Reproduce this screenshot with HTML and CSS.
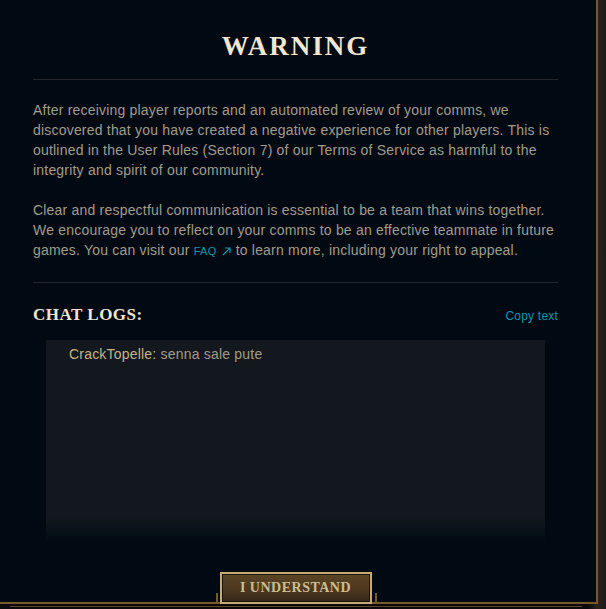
FILE: index.html
```html
<!DOCTYPE html>
<html>
<head>
<meta charset="utf-8">
<link rel="stylesheet" href="styles.css">
</head>
<body>
<div class="modal">
  <h1 class="title">WARNING</h1>
  <div class="divider"></div>
  <div class="body">
    <p>After receiving player reports and an automated review of your comms, we discovered that you have created a negative experience for other players. This is outlined in the User Rules (Section 7) of our Terms of Service as harmful to the integrity and spirit of our community.</p>
    <p>Clear and respectful communication is essential to be a team that wins together. We encourage you to reflect on your comms to be an effective teammate in future games. You can visit our <a class="faq">FAQ</a><svg class="arrow" width="9" height="9" viewBox="0 0 9 9"><path d="M1 8 L8 1 M3 1 H8 V6" fill="none" stroke="#0397ab" stroke-width="1.2"/></svg> to learn more, including your right to appeal.</p>
  </div>
  <div class="divider second"></div>
  <div class="chat-head">
    <h2 class="chat-title">CHAT LOGS:</h2>
    <span class="copy">Copy text</span>
  </div>
  <div class="chat-box">
    <div class="line"><span class="name">CrackTopelle:</span> senna sale pute</div>
  </div>
  <div class="actions">
    <button class="btn">I UNDERSTAND</button>
  </div>
</div>
<div class="outer-line"></div>
</body>
</html>
```

FILE: styles.css
```css
html, body {
  margin: 0;
  padding: 0;
}
body {
  width: 606px;
  height: 609px;
  overflow: hidden;
  background: linear-gradient(90deg, #0b0a0c 0%, #0b0a0c 97%, #2a221f 98.5%, #1e1918 100%);
  font-family: "Liberation Sans", Arial, sans-serif;
}
.modal {
  box-sizing: border-box;
  width: 598px;
  height: 604px;
  background: #010a13;
  border-right: 2px solid #785a28;
  border-bottom: 2px solid #785a28;
  padding: 0 38px 0 33px;
  display: flex;
  flex-direction: column;
  position: relative;
}
.title {
  margin: 31px 0 0;
  height: 30px;
  text-align: center;
  font-family: "Liberation Serif", "Times New Roman", serif;
  font-weight: bold;
  font-size: 27px;
  line-height: 30px;
  letter-spacing: 2px;
  color: #f0e6d2;
}
.divider {
  height: 1px;
  background: #23272d;
  margin-top: 18px;
}
.body {
  padding-top: 20px;
}
.body p {
  margin: 0 0 20px;
  font-size: 14px;
  line-height: 20px;
  letter-spacing: 0.2px;
  color: #a09b8c;
}
.body p:last-child {
  margin-bottom: 0;
}
.faq {
  color: #0397ab;
  font-size: 11px;
  letter-spacing: 0.3px;
}
.arrow {
  vertical-align: -1px;
  margin-left: 5px;
  margin-right: 1px;
}
.divider.second {
  margin-top: 21px;
}
.chat-head {
  display: flex;
  justify-content: space-between;
  align-items: center;
  margin-top: 22px;
  height: 20px;
}
.chat-title {
  margin: 0;
  font-family: "Liberation Serif", "Times New Roman", serif;
  font-weight: bold;
  font-size: 17px;
  letter-spacing: 0.5px;
  color: #f0e6d2;
}
.copy {
  font-size: 12px;
  letter-spacing: 0.2px;
  color: #0397ab;
  position: relative;
  top: 1px;
}
.chat-box {
  margin: 15px 13px 0;
  height: 202px;
  background: linear-gradient(180deg, #12181e 0%, #12181e 88%, #010a13 100%);
  padding: 6px 23px;
  box-sizing: border-box;
}
.line {
  font-size: 14px;
  line-height: 16px;
  letter-spacing: 0.2px;
  color: #a09b8c;
}
.name {
  color: #c4b38a;
}
.actions {
  margin-top: auto;
  margin-bottom: -2px;
  display: flex;
  justify-content: center;
  position: relative;
  z-index: 1;
}
.actions::before,
.actions::after {
  content: "";
  position: absolute;
  bottom: 2px;
  width: 2px;
  height: 9px;
  background: #785a28;
}
.actions::before { left: 183px; }
.actions::after { left: 342px; }
.btn {
  width: 152px;
  height: 32px;
  box-sizing: border-box;
  border: 2px solid #c8aa6e;
  box-shadow: inset 0 0 0 1px #1a1410;
  background: linear-gradient(180deg, #5c4526 0%, #4c381e 55%, #33271a 100%);
  font-family: "Liberation Serif", "Times New Roman", serif;
  font-weight: bold;
  font-size: 14px;
  letter-spacing: 0.5px;
  color: #cdbe91;
  padding: 0;
  cursor: pointer;
}
.outer-line {
  margin: 2px 0 0 10px;
  width: 572px;
  height: 1px;
  background: #5a4420;
}
```
